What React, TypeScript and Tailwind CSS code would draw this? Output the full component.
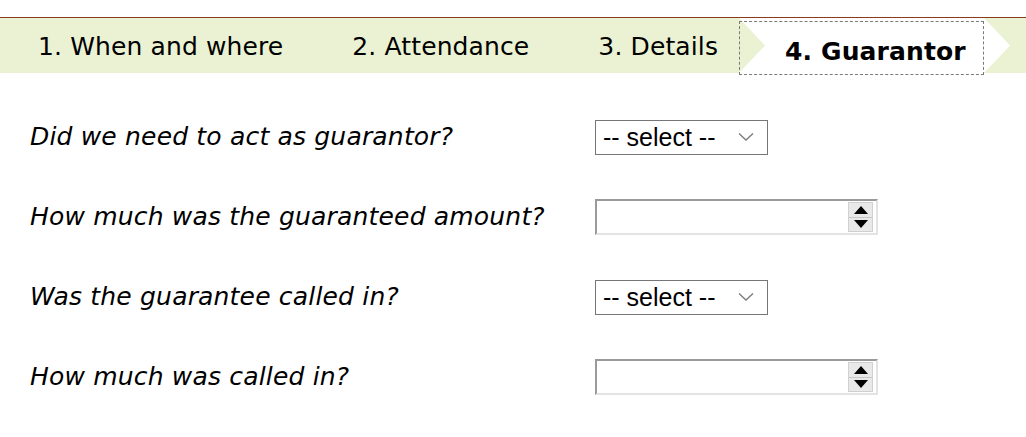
import React from "react";

const tabs = ["1. When and where", "2. Attendance", "3. Details"];

const SelectBox = () => (
  <div className="flex h-[35px] w-[173px] items-center border border-[#767676] bg-white pl-[7px] font-['Liberation_Sans',Arial,sans-serif] text-[25px] leading-none text-black">
    <span>-- select --</span>
    <svg className="ml-auto mr-[13px]" width="16" height="10" viewBox="0 0 16 10">
      <path d="M1 1.5 L8 8 L15 1.5" fill="none" stroke="#7a7a7a" strokeWidth="1.3" />
    </svg>
  </div>
);

const NumberBox = () => (
  <div className="relative h-[36px] w-[283px] border-t-2 border-l-2 border-b-2 border-r-2 border-t-[#9a9a9a] border-l-[#9a9a9a] border-b-[#e3e3e3] border-r-[#e3e3e3] bg-white">
    <div className="absolute right-[3px] top-[1px] flex h-[30px] w-[25px] flex-col border border-[#d0d0d0] bg-[#e9e9e9]">
      <div className="flex flex-1 items-center justify-center border-b border-[#c8c8c8]">
        <svg width="14" height="8" viewBox="0 0 14 8">
          <path d="M0 8 L7 0 L14 8 Z" fill="#000" />
        </svg>
      </div>
      <div className="flex flex-1 items-center justify-center">
        <svg width="14" height="8" viewBox="0 0 14 8">
          <path d="M0 0 L7 8 L14 0 Z" fill="#000" />
        </svg>
      </div>
    </div>
  </div>
);

const rows: { label: string; kind: "select" | "number" }[] = [
  { label: "Did we need to act as guarantor?", kind: "select" },
  { label: "How much was the guaranteed amount?", kind: "number" },
  { label: "Was the guarantee called in?", kind: "select" },
  { label: "How much was called in?", kind: "number" },
];

export default function App() {
  return (
    <div className="h-[437px] w-[1026px] overflow-hidden bg-white font-['DejaVu_Sans',Verdana,sans-serif] text-black">
      <div className="h-[17px]" />
      <div className="h-px bg-[#8a3c1e]" />
      <div className="flex h-[55px] items-stretch bg-[#eaf2d3] text-[25px] tracking-[0.12px]">
        {tabs.map((t, i) => (
          <div
            key={t}
            className={`flex items-center pt-[2px] ${i === 0 ? "ml-[38px]" : "ml-[69px]"}`}
          >
            {t}
          </div>
        ))}
        <div className="relative ml-[21px] w-[271px]">
          <div className="absolute inset-0 bg-white [clip-path:polygon(0_0,245px_0,271px_50%,245px_100%,0_100%,26px_50%)]" />
          <div className="absolute left-0 top-[3px] h-[54px] w-[245px] border border-dashed border-[#7a7a7a]" />
          <div className="relative flex h-full items-center pl-[46px] pt-[13px] font-bold">
            4. Guarantor
          </div>
        </div>
      </div>
      <div className="mt-[24px] flex flex-col">
        {rows.map((r) => (
          <div key={r.label} className="flex h-[80px] items-center">
            <div className="w-[595px] pl-[30px] text-[25px] italic tracking-[0.18px]">{r.label}</div>
            {r.kind === "select" ? <SelectBox /> : <NumberBox />}
          </div>
        ))}
      </div>
    </div>
  );
}
